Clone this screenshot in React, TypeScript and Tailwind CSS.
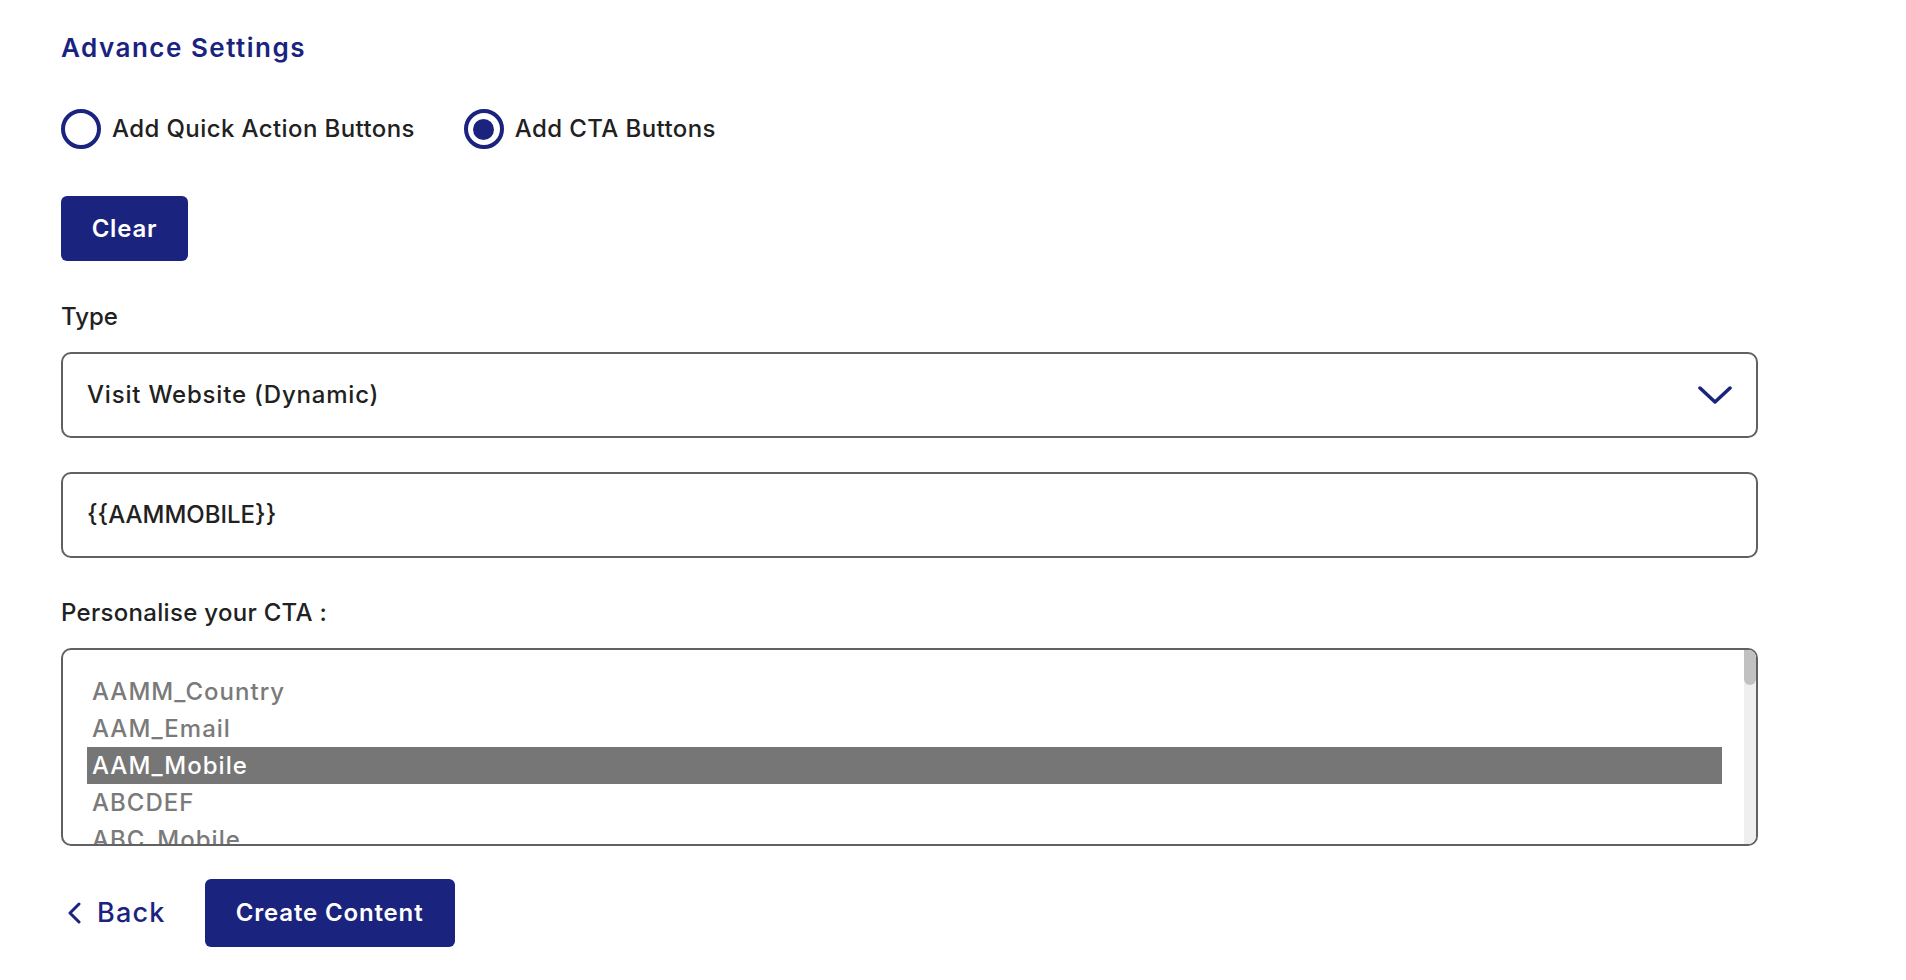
import { useState } from 'react';

const options = ['AAMM_Country', 'AAM_Email', 'AAM_Mobile', 'ABCDEF', 'ABC_Mobile', 'ABC_Name'];

function Radio({ checked, label }: { checked: boolean; label: string }) {
  return (
    <label className="flex items-center gap-[11px] cursor-pointer">
      <span className="w-[40px] h-[40px] rounded-full border-[4px] border-[#1a237e] flex items-center justify-center">
        {checked && <span className="w-[21px] h-[21px] rounded-full bg-[#1a237e]" />}
      </span>
      <span className="text-[24px] leading-[36px] tracking-[0.4px] font-medium text-[#212121]">{label}</span>
    </label>
  );
}

export default function App() {
  const [selected] = useState('AAM_Mobile');

  return (
    <div
      className="min-h-screen bg-white pl-[61px] pt-[30px]"
      style={{ fontFamily: 'Inter, "Noto Sans", sans-serif' }}
    >
      <h2 className="text-[26px] leading-[36px] tracking-[1.5px] font-semibold text-[#1a237e]">Advance Settings</h2>

      <div className="mt-[43px] flex items-center gap-[49px]">
        <Radio checked={false} label="Add Quick Action Buttons" />
        <Radio checked label="Add CTA Buttons" />
      </div>

      <button className="mt-[47px] w-[127px] h-[65px] rounded-[6px] bg-[#1a237e] text-white text-[24px] tracking-[0.8px] font-semibold">
        Clear
      </button>

      <div className="mt-[38px] text-[24px] leading-[36px] font-medium text-[#212121]">Type</div>

      <div className="mt-[17px] w-[1697px] h-[86px] rounded-[10px] border-2 border-[#616161] flex items-center justify-between pl-[24px] pr-[24px]">
        <span className="text-[24px] tracking-[0.8px] font-medium text-[#212121]">Visit Website (Dynamic)</span>
        <svg width="34" height="20" viewBox="0 0 34 20" fill="none">
          <path d="M2 3 L17 17 L32 3" stroke="#1a237e" strokeWidth="3.5" strokeLinecap="round" strokeLinejoin="round" />
        </svg>
      </div>

      <div className="mt-[34px] w-[1697px] h-[86px] rounded-[10px] border-2 border-[#616161] flex items-center pl-[24px]">
        <span className="text-[24px] font-medium text-[#212121]">{'{{AAMMOBILE}}'}</span>
      </div>

      <div className="mt-[37px] text-[24px] leading-[36px] tracking-[0.3px] font-medium text-[#212121]">
        Personalise your CTA :
      </div>

      <div className="mt-[17px] w-[1697px] h-[198px] rounded-[10px] border-2 border-[#616161] flex overflow-hidden">
        <div className="flex-1 pl-[24px] pr-[22px] pt-[23px]">
          {options.map((o) => (
            <div
              key={o}
              className={
                o === selected
                  ? 'h-[37px] leading-[37px] px-[5px] text-[24px] tracking-[1px] font-medium bg-[#767676] text-white'
                  : 'h-[37px] leading-[37px] px-[5px] text-[24px] tracking-[1px] font-medium text-[#7a7a7a]'
              }
            >
              {o}
            </div>
          ))}
        </div>
        <div className="w-[12px] bg-[#efefef] flex flex-col">
          <div className="h-[35px] rounded-b-[6px] bg-[#c1c1c1]" />
        </div>
      </div>

      <div className="mt-[33px] flex items-center">
        <button className="flex items-center gap-[16px] pl-[6px] text-[#1a237e]">
          <svg width="14" height="22" viewBox="0 0 14 22" fill="none">
            <path d="M12 2 L3 11 L12 20" stroke="#1a237e" strokeWidth="3" strokeLinecap="round" strokeLinejoin="round" />
          </svg>
          <span className="text-[27px] tracking-[1.2px] font-medium">Back</span>
        </button>
        <button className="ml-[39px] w-[250px] h-[68px] rounded-[6px] bg-[#1a237e] text-white text-[24px] tracking-[0.85px] font-semibold">
          Create Content
        </button>
      </div>
    </div>
  );
}
